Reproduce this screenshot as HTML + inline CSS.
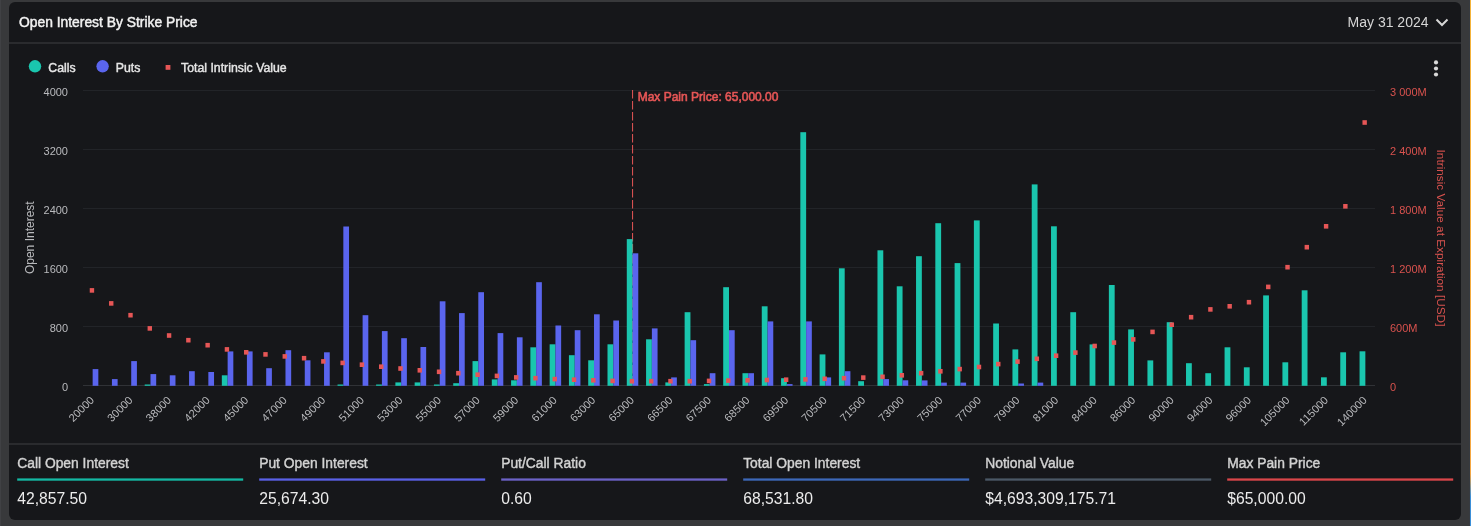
<!DOCTYPE html><html><head><meta charset="utf-8"><style>
html,body{margin:0;padding:0;background:#38393b;width:1471px;height:526px;overflow:hidden}
svg{display:block;will-change:transform;font-family:"Liberation Sans",sans-serif}
</style></head><body>
<svg width="1471" height="526" viewBox="0 0 1471 526">
<rect x="0" y="0" width="1471" height="526" fill="#38393b"/>
<rect x="0" y="0" width="1" height="526" fill="#404144"/>
<defs><linearGradient id="edge" x1="0" y1="0" x2="0" y2="1"><stop offset="0" stop-color="#f4b43a"/><stop offset="0.90" stop-color="#f5a742"/><stop offset="0.945" stop-color="#3b8fd8"/><stop offset="1" stop-color="#3b8fd8"/></linearGradient></defs>
<rect x="1469" y="0" width="1" height="526" fill="#363a40"/>
<rect x="1470" y="0" width="1" height="526" fill="url(#edge)"/>
<rect x="9" y="2" width="1452" height="518" rx="6" ry="6" fill="#16171a"/>
<rect x="9" y="42" width="1452" height="2" fill="#2a2b2e"/>
<rect x="9" y="443" width="1452" height="2" fill="#2a2b2e"/>
<text x="19" y="27.3" font-size="13.85" fill="#f2f2f2" stroke="#f2f2f2" stroke-width="0.45">Open Interest By Strike Price</text>
<text x="1428.5" y="27.2" font-size="14" fill="#d6d6d6" text-anchor="end">May 31 2024</text>
<polyline points="1436.5,19.5 1442,25 1447.5,19.5" fill="none" stroke="#d6d6d6" stroke-width="2"/>
<circle cx="35" cy="66.3" r="6.2" fill="#1ac6ae"/>
<text x="48.3" y="71.9" font-size="12.3" fill="#e6e6e6" stroke="#e6e6e6" stroke-width="0.4">Calls</text>
<circle cx="102.6" cy="66.3" r="6.2" fill="#5a65ee"/>
<text x="115.8" y="71.9" font-size="12.3" fill="#e6e6e6" stroke="#e6e6e6" stroke-width="0.4">Puts</text>
<rect x="165.6" y="65" width="4.8" height="4.8" fill="#e65656"/>
<text x="181" y="71.9" font-size="12.3" fill="#e6e6e6" stroke="#e6e6e6" stroke-width="0.4">Total Intrinsic Value</text>
<circle cx="1436" cy="62.4" r="2.1" fill="#d8d8d8"/>
<circle cx="1436" cy="68.5" r="2.1" fill="#d8d8d8"/>
<circle cx="1436" cy="74.5" r="2.1" fill="#d8d8d8"/>
<rect x="83.0" y="90" width="1292.0" height="1" fill="#222428"/>
<text x="68" y="95.5" font-size="11" fill="#b9babd" text-anchor="end">4000</text>
<text x="1390" y="95.5" font-size="11" fill="#d9524e">3 000M</text>
<rect x="83.0" y="149" width="1292.0" height="1" fill="#222428"/>
<text x="68" y="154.5" font-size="11" fill="#b9babd" text-anchor="end">3200</text>
<text x="1390" y="154.5" font-size="11" fill="#d9524e">2 400M</text>
<rect x="83.0" y="208" width="1292.0" height="1" fill="#222428"/>
<text x="68" y="213.5" font-size="11" fill="#b9babd" text-anchor="end">2400</text>
<text x="1390" y="213.5" font-size="11" fill="#d9524e">1 800M</text>
<rect x="83.0" y="267" width="1292.0" height="1" fill="#222428"/>
<text x="68" y="272.5" font-size="11" fill="#b9babd" text-anchor="end">1600</text>
<text x="1390" y="272.5" font-size="11" fill="#d9524e">1 200M</text>
<rect x="83.0" y="326" width="1292.0" height="1" fill="#222428"/>
<text x="68" y="331.5" font-size="11" fill="#b9babd" text-anchor="end">800</text>
<text x="1390" y="331.5" font-size="11" fill="#d9524e">600M</text>
<rect x="83.0" y="385" width="1292.0" height="1" fill="#303236"/>
<text x="68" y="390.5" font-size="11" fill="#b9babd" text-anchor="end">0</text>
<text x="1390" y="390.5" font-size="11" fill="#d9524e">0</text>
<text transform="translate(33.5,237.7) rotate(-90)" font-size="12" fill="#b9babd" text-anchor="middle">Open Interest</text>
<text transform="translate(1437,238) rotate(90)" font-size="11.8" fill="#d9524e" text-anchor="middle">Intrinsic Value at Expiration [USD]</text>
<line x1="632.58" y1="90" x2="632.58" y2="386" stroke="#e65656" stroke-width="1" stroke-dasharray="8.5,2.5"/>
<text x="637.7" y="100.7" font-size="12" fill="#e65656" stroke="#e65656" stroke-width="0.6">Max Pain Price: 65,000.00</text>
<rect x="92.64" y="369.1" width="5.7" height="16.7" fill="#5a65ee"/>
<rect x="111.93" y="379.1" width="5.7" height="6.7" fill="#5a65ee"/>
<rect x="131.21" y="361.1" width="5.7" height="24.7" fill="#5a65ee"/>
<rect x="144.69" y="384.5" width="5.8" height="1.3" fill="#1ac6ae"/>
<rect x="150.49" y="374.1" width="5.7" height="11.7" fill="#5a65ee"/>
<rect x="169.78" y="375.3" width="5.7" height="10.5" fill="#5a65ee"/>
<rect x="189.06" y="371.2" width="5.7" height="14.6" fill="#5a65ee"/>
<rect x="208.34" y="372.0" width="5.7" height="13.8" fill="#5a65ee"/>
<rect x="221.83" y="375.3" width="5.8" height="10.5" fill="#1ac6ae"/>
<rect x="227.63" y="351.4" width="5.7" height="34.4" fill="#5a65ee"/>
<rect x="246.91" y="351.4" width="5.7" height="34.4" fill="#5a65ee"/>
<rect x="266.19" y="368.2" width="5.7" height="17.6" fill="#5a65ee"/>
<rect x="285.48" y="350.2" width="5.7" height="35.6" fill="#5a65ee"/>
<rect x="304.76" y="360.3" width="5.7" height="25.5" fill="#5a65ee"/>
<rect x="324.04" y="352.3" width="5.7" height="33.5" fill="#5a65ee"/>
<rect x="337.53" y="384.5" width="5.8" height="1.3" fill="#1ac6ae"/>
<rect x="343.33" y="226.5" width="5.7" height="159.3" fill="#5a65ee"/>
<rect x="362.61" y="315.2" width="5.7" height="70.6" fill="#5a65ee"/>
<rect x="376.10" y="384.5" width="5.8" height="1.3" fill="#1ac6ae"/>
<rect x="381.90" y="331.1" width="5.7" height="54.7" fill="#5a65ee"/>
<rect x="395.38" y="382.4" width="5.8" height="3.4" fill="#1ac6ae"/>
<rect x="401.18" y="338.2" width="5.7" height="47.6" fill="#5a65ee"/>
<rect x="414.66" y="382.4" width="5.8" height="3.4" fill="#1ac6ae"/>
<rect x="420.46" y="347.0" width="5.7" height="38.8" fill="#5a65ee"/>
<rect x="433.95" y="384.5" width="5.8" height="1.3" fill="#1ac6ae"/>
<rect x="439.75" y="301.3" width="5.7" height="84.5" fill="#5a65ee"/>
<rect x="453.23" y="383.2" width="5.8" height="2.6" fill="#1ac6ae"/>
<rect x="459.03" y="313.1" width="5.7" height="72.7" fill="#5a65ee"/>
<rect x="472.51" y="361.1" width="5.8" height="24.7" fill="#1ac6ae"/>
<rect x="478.31" y="292.2" width="5.7" height="93.6" fill="#5a65ee"/>
<rect x="491.80" y="379.4" width="5.8" height="6.4" fill="#1ac6ae"/>
<rect x="497.60" y="333.1" width="5.7" height="52.7" fill="#5a65ee"/>
<rect x="511.08" y="380.3" width="5.8" height="5.5" fill="#1ac6ae"/>
<rect x="516.88" y="337.3" width="5.7" height="48.5" fill="#5a65ee"/>
<rect x="530.36" y="347.3" width="5.8" height="38.5" fill="#1ac6ae"/>
<rect x="536.16" y="282.2" width="5.7" height="103.6" fill="#5a65ee"/>
<rect x="549.65" y="344.3" width="5.8" height="41.5" fill="#1ac6ae"/>
<rect x="555.45" y="325.5" width="5.7" height="60.3" fill="#5a65ee"/>
<rect x="568.93" y="355.2" width="5.8" height="30.6" fill="#1ac6ae"/>
<rect x="574.73" y="330.2" width="5.7" height="55.6" fill="#5a65ee"/>
<rect x="588.21" y="360.3" width="5.8" height="25.5" fill="#1ac6ae"/>
<rect x="594.01" y="314.3" width="5.7" height="71.5" fill="#5a65ee"/>
<rect x="607.50" y="344.3" width="5.8" height="41.5" fill="#1ac6ae"/>
<rect x="613.30" y="320.5" width="5.7" height="65.3" fill="#5a65ee"/>
<rect x="626.78" y="239.1" width="5.8" height="146.7" fill="#1ac6ae"/>
<rect x="632.58" y="253.3" width="5.7" height="132.5" fill="#5a65ee"/>
<rect x="646.07" y="339.3" width="5.8" height="46.5" fill="#1ac6ae"/>
<rect x="651.87" y="328.4" width="5.7" height="57.4" fill="#5a65ee"/>
<rect x="665.35" y="382.4" width="5.8" height="3.4" fill="#1ac6ae"/>
<rect x="671.15" y="377.4" width="5.7" height="8.4" fill="#5a65ee"/>
<rect x="684.63" y="312.2" width="5.8" height="73.6" fill="#1ac6ae"/>
<rect x="690.43" y="340.2" width="5.7" height="45.6" fill="#5a65ee"/>
<rect x="703.92" y="384.1" width="5.8" height="1.7" fill="#1ac6ae"/>
<rect x="709.72" y="373.2" width="5.7" height="12.6" fill="#5a65ee"/>
<rect x="723.20" y="287.2" width="5.8" height="98.6" fill="#1ac6ae"/>
<rect x="729.00" y="330.2" width="5.7" height="55.6" fill="#5a65ee"/>
<rect x="742.48" y="373.2" width="5.8" height="12.6" fill="#1ac6ae"/>
<rect x="748.28" y="373.2" width="5.7" height="12.6" fill="#5a65ee"/>
<rect x="761.77" y="306.3" width="5.8" height="79.5" fill="#1ac6ae"/>
<rect x="767.57" y="321.4" width="5.7" height="64.4" fill="#5a65ee"/>
<rect x="781.05" y="378.2" width="5.8" height="7.6" fill="#1ac6ae"/>
<rect x="786.85" y="384.1" width="5.7" height="1.7" fill="#5a65ee"/>
<rect x="800.33" y="132.2" width="5.8" height="253.6" fill="#1ac6ae"/>
<rect x="806.13" y="321.4" width="5.7" height="64.4" fill="#5a65ee"/>
<rect x="819.62" y="354.4" width="5.8" height="31.4" fill="#1ac6ae"/>
<rect x="825.42" y="377.4" width="5.7" height="8.4" fill="#5a65ee"/>
<rect x="838.90" y="268.3" width="5.8" height="117.5" fill="#1ac6ae"/>
<rect x="844.70" y="371.2" width="5.7" height="14.6" fill="#5a65ee"/>
<rect x="858.19" y="381.2" width="5.8" height="4.6" fill="#1ac6ae"/>
<rect x="877.47" y="250.3" width="5.8" height="135.5" fill="#1ac6ae"/>
<rect x="883.27" y="379.1" width="5.7" height="6.7" fill="#5a65ee"/>
<rect x="896.75" y="286.3" width="5.8" height="99.5" fill="#1ac6ae"/>
<rect x="902.55" y="380.3" width="5.7" height="5.5" fill="#5a65ee"/>
<rect x="916.04" y="256.2" width="5.8" height="129.6" fill="#1ac6ae"/>
<rect x="921.84" y="380.4" width="5.7" height="5.4" fill="#5a65ee"/>
<rect x="935.32" y="223.2" width="5.8" height="162.6" fill="#1ac6ae"/>
<rect x="941.12" y="382.6" width="5.7" height="3.2" fill="#5a65ee"/>
<rect x="954.60" y="263.1" width="5.8" height="122.7" fill="#1ac6ae"/>
<rect x="960.40" y="382.6" width="5.7" height="3.2" fill="#5a65ee"/>
<rect x="973.89" y="220.4" width="5.8" height="165.4" fill="#1ac6ae"/>
<rect x="993.17" y="323.5" width="5.8" height="62.3" fill="#1ac6ae"/>
<rect x="1012.45" y="349.4" width="5.8" height="36.4" fill="#1ac6ae"/>
<rect x="1018.25" y="383.5" width="5.7" height="2.3" fill="#5a65ee"/>
<rect x="1031.74" y="184.4" width="5.8" height="201.4" fill="#1ac6ae"/>
<rect x="1037.54" y="382.6" width="5.7" height="3.2" fill="#5a65ee"/>
<rect x="1051.02" y="226.3" width="5.8" height="159.5" fill="#1ac6ae"/>
<rect x="1070.30" y="312.2" width="5.8" height="73.6" fill="#1ac6ae"/>
<rect x="1089.59" y="344.4" width="5.8" height="41.4" fill="#1ac6ae"/>
<rect x="1108.87" y="285.0" width="5.8" height="100.8" fill="#1ac6ae"/>
<rect x="1128.16" y="329.4" width="5.8" height="56.4" fill="#1ac6ae"/>
<rect x="1147.44" y="360.4" width="5.8" height="25.4" fill="#1ac6ae"/>
<rect x="1166.72" y="322.2" width="5.8" height="63.6" fill="#1ac6ae"/>
<rect x="1186.01" y="363.2" width="5.8" height="22.6" fill="#1ac6ae"/>
<rect x="1205.29" y="373.2" width="5.8" height="12.6" fill="#1ac6ae"/>
<rect x="1224.57" y="347.3" width="5.8" height="38.5" fill="#1ac6ae"/>
<rect x="1243.86" y="367.3" width="5.8" height="18.5" fill="#1ac6ae"/>
<rect x="1263.14" y="295.4" width="5.8" height="90.4" fill="#1ac6ae"/>
<rect x="1282.42" y="362.3" width="5.8" height="23.5" fill="#1ac6ae"/>
<rect x="1301.71" y="290.3" width="5.8" height="95.5" fill="#1ac6ae"/>
<rect x="1320.99" y="377.3" width="5.8" height="8.5" fill="#1ac6ae"/>
<rect x="1340.27" y="352.3" width="5.8" height="33.5" fill="#1ac6ae"/>
<rect x="1359.56" y="351.3" width="5.8" height="34.5" fill="#1ac6ae"/>
<rect x="89.74" y="288.1" width="4.4" height="4.6" fill="#e65656"/>
<rect x="109.03" y="301.1" width="4.4" height="4.6" fill="#e65656"/>
<rect x="128.31" y="312.9" width="4.4" height="4.6" fill="#e65656"/>
<rect x="147.59" y="326.1" width="4.4" height="4.6" fill="#e65656"/>
<rect x="166.88" y="333.2" width="4.4" height="4.6" fill="#e65656"/>
<rect x="186.16" y="337.9" width="4.4" height="4.6" fill="#e65656"/>
<rect x="205.44" y="342.9" width="4.4" height="4.6" fill="#e65656"/>
<rect x="224.73" y="347.1" width="4.4" height="4.6" fill="#e65656"/>
<rect x="244.01" y="350.0" width="4.4" height="4.6" fill="#e65656"/>
<rect x="263.29" y="352.1" width="4.4" height="4.6" fill="#e65656"/>
<rect x="282.58" y="354.1" width="4.4" height="4.6" fill="#e65656"/>
<rect x="301.86" y="355.9" width="4.4" height="4.6" fill="#e65656"/>
<rect x="321.14" y="359.1" width="4.4" height="4.6" fill="#e65656"/>
<rect x="340.43" y="360.6" width="4.4" height="4.6" fill="#e65656"/>
<rect x="359.71" y="362.4" width="4.4" height="4.6" fill="#e65656"/>
<rect x="379.00" y="364.4" width="4.4" height="4.6" fill="#e65656"/>
<rect x="398.28" y="366.2" width="4.4" height="4.6" fill="#e65656"/>
<rect x="417.56" y="368.0" width="4.4" height="4.6" fill="#e65656"/>
<rect x="436.85" y="369.5" width="4.4" height="4.6" fill="#e65656"/>
<rect x="456.13" y="370.9" width="4.4" height="4.6" fill="#e65656"/>
<rect x="475.41" y="372.4" width="4.4" height="4.6" fill="#e65656"/>
<rect x="494.70" y="373.6" width="4.4" height="4.6" fill="#e65656"/>
<rect x="513.98" y="375.1" width="4.4" height="4.6" fill="#e65656"/>
<rect x="533.26" y="375.9" width="4.4" height="4.6" fill="#e65656"/>
<rect x="552.55" y="376.8" width="4.4" height="4.6" fill="#e65656"/>
<rect x="571.83" y="377.4" width="4.4" height="4.6" fill="#e65656"/>
<rect x="591.11" y="378.0" width="4.4" height="4.6" fill="#e65656"/>
<rect x="610.40" y="378.6" width="4.4" height="4.6" fill="#e65656"/>
<rect x="629.68" y="378.9" width="4.4" height="4.6" fill="#e65656"/>
<rect x="648.97" y="378.9" width="4.4" height="4.6" fill="#e65656"/>
<rect x="668.25" y="378.9" width="4.4" height="4.6" fill="#e65656"/>
<rect x="687.53" y="378.9" width="4.4" height="4.6" fill="#e65656"/>
<rect x="706.82" y="378.6" width="4.4" height="4.6" fill="#e65656"/>
<rect x="726.10" y="378.3" width="4.4" height="4.6" fill="#e65656"/>
<rect x="745.38" y="378.0" width="4.4" height="4.6" fill="#e65656"/>
<rect x="764.67" y="377.7" width="4.4" height="4.6" fill="#e65656"/>
<rect x="783.95" y="377.4" width="4.4" height="4.6" fill="#e65656"/>
<rect x="803.23" y="377.1" width="4.4" height="4.6" fill="#e65656"/>
<rect x="822.52" y="376.5" width="4.4" height="4.6" fill="#e65656"/>
<rect x="841.80" y="375.9" width="4.4" height="4.6" fill="#e65656"/>
<rect x="861.09" y="375.3" width="4.4" height="4.6" fill="#e65656"/>
<rect x="880.37" y="374.5" width="4.4" height="4.6" fill="#e65656"/>
<rect x="899.65" y="373.0" width="4.4" height="4.6" fill="#e65656"/>
<rect x="918.94" y="370.9" width="4.4" height="4.6" fill="#e65656"/>
<rect x="938.22" y="369.0" width="4.4" height="4.6" fill="#e65656"/>
<rect x="957.50" y="366.8" width="4.4" height="4.6" fill="#e65656"/>
<rect x="976.79" y="364.7" width="4.4" height="4.6" fill="#e65656"/>
<rect x="996.07" y="361.8" width="4.4" height="4.6" fill="#e65656"/>
<rect x="1015.35" y="359.3" width="4.4" height="4.6" fill="#e65656"/>
<rect x="1034.64" y="356.5" width="4.4" height="4.6" fill="#e65656"/>
<rect x="1053.92" y="353.4" width="4.4" height="4.6" fill="#e65656"/>
<rect x="1073.20" y="350.3" width="4.4" height="4.6" fill="#e65656"/>
<rect x="1092.49" y="343.7" width="4.4" height="4.6" fill="#e65656"/>
<rect x="1111.77" y="340.3" width="4.4" height="4.6" fill="#e65656"/>
<rect x="1131.06" y="337.1" width="4.4" height="4.6" fill="#e65656"/>
<rect x="1150.34" y="329.6" width="4.4" height="4.6" fill="#e65656"/>
<rect x="1169.62" y="322.4" width="4.4" height="4.6" fill="#e65656"/>
<rect x="1188.91" y="314.9" width="4.4" height="4.6" fill="#e65656"/>
<rect x="1208.19" y="307.1" width="4.4" height="4.6" fill="#e65656"/>
<rect x="1227.47" y="304.0" width="4.4" height="4.6" fill="#e65656"/>
<rect x="1246.76" y="299.9" width="4.4" height="4.6" fill="#e65656"/>
<rect x="1266.04" y="284.6" width="4.4" height="4.6" fill="#e65656"/>
<rect x="1285.32" y="264.9" width="4.4" height="4.6" fill="#e65656"/>
<rect x="1304.61" y="244.9" width="4.4" height="4.6" fill="#e65656"/>
<rect x="1323.89" y="224.0" width="4.4" height="4.6" fill="#e65656"/>
<rect x="1343.17" y="204.0" width="4.4" height="4.6" fill="#e65656"/>
<rect x="1362.46" y="120.2" width="4.4" height="4.6" fill="#e65656"/>
<text transform="translate(89.14,395.2) rotate(-45)" font-size="11" fill="#b9babd" text-anchor="end" dominant-baseline="hanging">20000</text>
<text transform="translate(127.71,395.2) rotate(-45)" font-size="11" fill="#b9babd" text-anchor="end" dominant-baseline="hanging">30000</text>
<text transform="translate(166.28,395.2) rotate(-45)" font-size="11" fill="#b9babd" text-anchor="end" dominant-baseline="hanging">38000</text>
<text transform="translate(204.84,395.2) rotate(-45)" font-size="11" fill="#b9babd" text-anchor="end" dominant-baseline="hanging">42000</text>
<text transform="translate(243.41,395.2) rotate(-45)" font-size="11" fill="#b9babd" text-anchor="end" dominant-baseline="hanging">45000</text>
<text transform="translate(281.98,395.2) rotate(-45)" font-size="11" fill="#b9babd" text-anchor="end" dominant-baseline="hanging">47000</text>
<text transform="translate(320.54,395.2) rotate(-45)" font-size="11" fill="#b9babd" text-anchor="end" dominant-baseline="hanging">49000</text>
<text transform="translate(359.11,395.2) rotate(-45)" font-size="11" fill="#b9babd" text-anchor="end" dominant-baseline="hanging">51000</text>
<text transform="translate(397.68,395.2) rotate(-45)" font-size="11" fill="#b9babd" text-anchor="end" dominant-baseline="hanging">53000</text>
<text transform="translate(436.25,395.2) rotate(-45)" font-size="11" fill="#b9babd" text-anchor="end" dominant-baseline="hanging">55000</text>
<text transform="translate(474.81,395.2) rotate(-45)" font-size="11" fill="#b9babd" text-anchor="end" dominant-baseline="hanging">57000</text>
<text transform="translate(513.38,395.2) rotate(-45)" font-size="11" fill="#b9babd" text-anchor="end" dominant-baseline="hanging">59000</text>
<text transform="translate(551.95,395.2) rotate(-45)" font-size="11" fill="#b9babd" text-anchor="end" dominant-baseline="hanging">61000</text>
<text transform="translate(590.51,395.2) rotate(-45)" font-size="11" fill="#b9babd" text-anchor="end" dominant-baseline="hanging">63000</text>
<text transform="translate(629.08,395.2) rotate(-45)" font-size="11" fill="#b9babd" text-anchor="end" dominant-baseline="hanging">65000</text>
<text transform="translate(667.65,395.2) rotate(-45)" font-size="11" fill="#b9babd" text-anchor="end" dominant-baseline="hanging">66500</text>
<text transform="translate(706.22,395.2) rotate(-45)" font-size="11" fill="#b9babd" text-anchor="end" dominant-baseline="hanging">67500</text>
<text transform="translate(744.78,395.2) rotate(-45)" font-size="11" fill="#b9babd" text-anchor="end" dominant-baseline="hanging">68500</text>
<text transform="translate(783.35,395.2) rotate(-45)" font-size="11" fill="#b9babd" text-anchor="end" dominant-baseline="hanging">69500</text>
<text transform="translate(821.92,395.2) rotate(-45)" font-size="11" fill="#b9babd" text-anchor="end" dominant-baseline="hanging">70500</text>
<text transform="translate(860.49,395.2) rotate(-45)" font-size="11" fill="#b9babd" text-anchor="end" dominant-baseline="hanging">71500</text>
<text transform="translate(899.05,395.2) rotate(-45)" font-size="11" fill="#b9babd" text-anchor="end" dominant-baseline="hanging">73000</text>
<text transform="translate(937.62,395.2) rotate(-45)" font-size="11" fill="#b9babd" text-anchor="end" dominant-baseline="hanging">75000</text>
<text transform="translate(976.19,395.2) rotate(-45)" font-size="11" fill="#b9babd" text-anchor="end" dominant-baseline="hanging">77000</text>
<text transform="translate(1014.75,395.2) rotate(-45)" font-size="11" fill="#b9babd" text-anchor="end" dominant-baseline="hanging">79000</text>
<text transform="translate(1053.32,395.2) rotate(-45)" font-size="11" fill="#b9babd" text-anchor="end" dominant-baseline="hanging">81000</text>
<text transform="translate(1091.89,395.2) rotate(-45)" font-size="11" fill="#b9babd" text-anchor="end" dominant-baseline="hanging">84000</text>
<text transform="translate(1130.46,395.2) rotate(-45)" font-size="11" fill="#b9babd" text-anchor="end" dominant-baseline="hanging">86000</text>
<text transform="translate(1169.02,395.2) rotate(-45)" font-size="11" fill="#b9babd" text-anchor="end" dominant-baseline="hanging">90000</text>
<text transform="translate(1207.59,395.2) rotate(-45)" font-size="11" fill="#b9babd" text-anchor="end" dominant-baseline="hanging">94000</text>
<text transform="translate(1246.16,395.2) rotate(-45)" font-size="11" fill="#b9babd" text-anchor="end" dominant-baseline="hanging">96000</text>
<text transform="translate(1284.72,395.2) rotate(-45)" font-size="11" fill="#b9babd" text-anchor="end" dominant-baseline="hanging">105000</text>
<text transform="translate(1323.29,395.2) rotate(-45)" font-size="11" fill="#b9babd" text-anchor="end" dominant-baseline="hanging">115000</text>
<text transform="translate(1361.86,395.2) rotate(-45)" font-size="11" fill="#b9babd" text-anchor="end" dominant-baseline="hanging">140000</text>
<text x="17.2" y="468.2" font-size="13.85" fill="#d2d2d2" stroke="#d2d2d2" stroke-width="0.4">Call Open Interest</text>
<rect x="17.2" y="478.4" width="226" height="2.3" fill="#14b8a3"/>
<text x="17.2" y="503.9" font-size="15.7" fill="#ececec">42,857.50</text>
<text x="259.2" y="468.2" font-size="13.85" fill="#d2d2d2" stroke="#d2d2d2" stroke-width="0.4">Put Open Interest</text>
<rect x="259.2" y="478.4" width="226" height="2.3" fill="#5a60e6"/>
<text x="259.2" y="503.9" font-size="15.7" fill="#ececec">25,674.30</text>
<text x="501.2" y="468.2" font-size="13.85" fill="#d2d2d2" stroke="#d2d2d2" stroke-width="0.4">Put/Call Ratio</text>
<rect x="501.2" y="478.4" width="226" height="2.3" fill="#6c62c6"/>
<text x="501.2" y="503.9" font-size="15.7" fill="#ececec">0.60</text>
<text x="743.2" y="468.2" font-size="13.85" fill="#d2d2d2" stroke="#d2d2d2" stroke-width="0.4">Total Open Interest</text>
<rect x="743.2" y="478.4" width="226" height="2.3" fill="#3d68b8"/>
<text x="743.2" y="503.9" font-size="15.7" fill="#ececec">68,531.80</text>
<text x="985.2" y="468.2" font-size="13.85" fill="#d2d2d2" stroke="#d2d2d2" stroke-width="0.4">Notional Value</text>
<rect x="985.2" y="478.4" width="226" height="2.3" fill="#4b5866"/>
<text x="985.2" y="503.9" font-size="15.7" fill="#ececec">$4,693,309,175.71</text>
<text x="1227.2" y="468.2" font-size="13.85" fill="#d2d2d2" stroke="#d2d2d2" stroke-width="0.4">Max Pain Price</text>
<rect x="1227.2" y="478.4" width="226" height="2.3" fill="#d9464a"/>
<text x="1227.2" y="503.9" font-size="15.7" fill="#ececec">$65,000.00</text>
</svg></body></html>
